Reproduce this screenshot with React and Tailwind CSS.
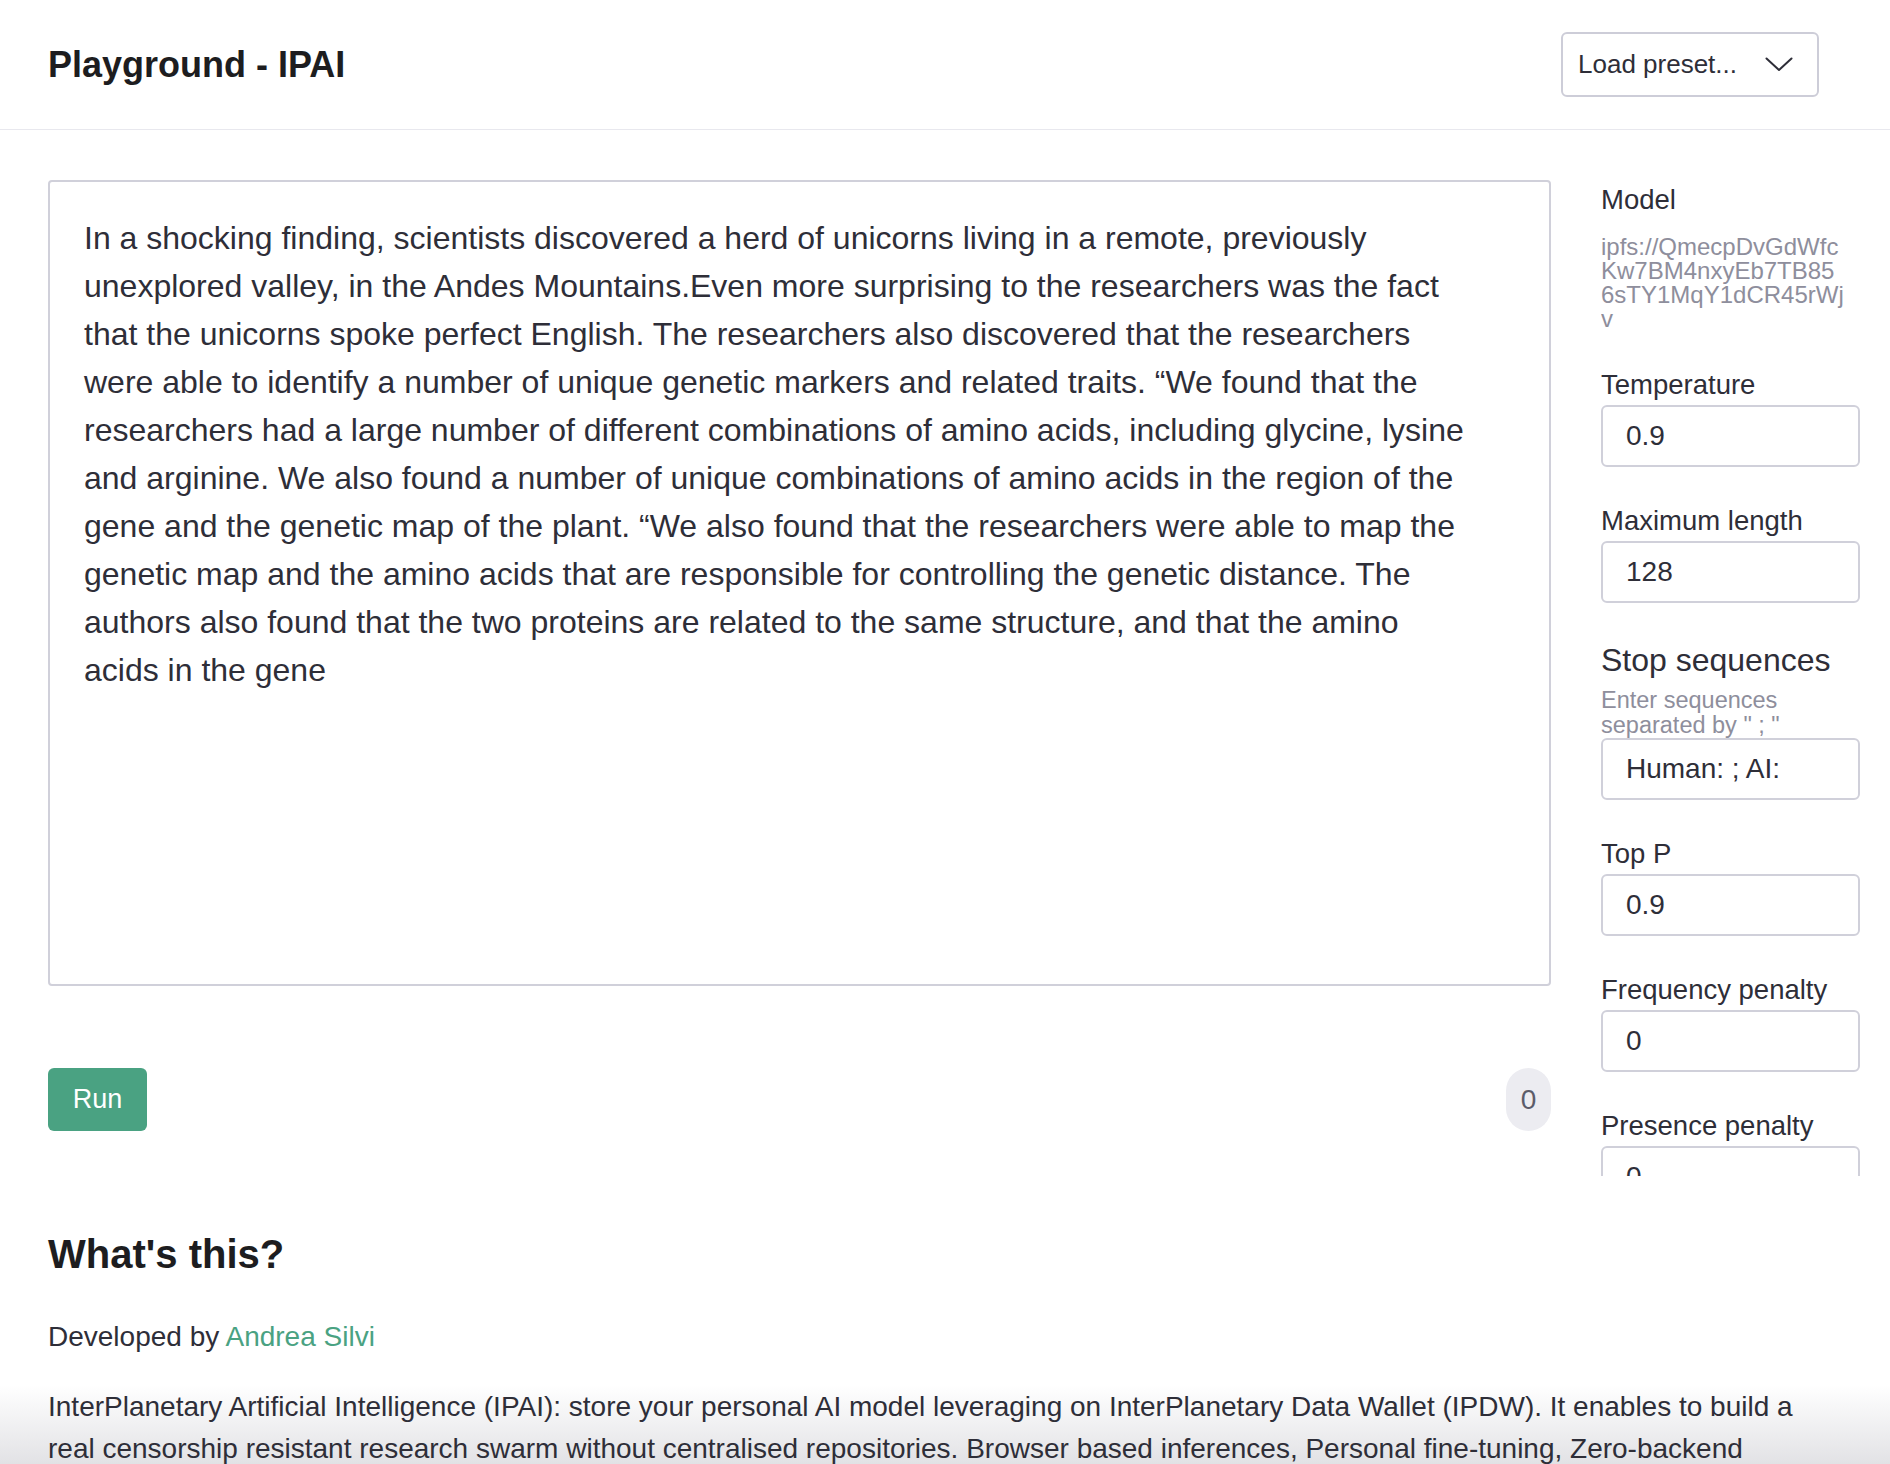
import React from "react";

const story =
  "In a shocking finding, scientists discovered a herd of unicorns living in a remote, previously unexplored valley, in the Andes Mountains.Even more surprising to the researchers was the fact that the unicorns spoke perfect English. The researchers also discovered that the researchers were able to identify a number of unique genetic markers and related traits. \u201cWe found that the researchers had a large number of different combinations of amino acids, including glycine, lysine and arginine. We also found a number of unique combinations of amino acids in the region of the gene and the genetic map of the plant. \u201cWe also found that the researchers were able to map the genetic map and the amino acids that are responsible for controlling the genetic distance. The authors also found that the two proteins are related to the same structure, and that the amino acids in the gene";

const modelLines = ["ipfs://QmecpDvGdWfc", "Kw7BM4nxyEb7TB85", "6sTY1MqY1dCR45rWj", "v"];

function Field({ label, value }) {
  return (
    <div className="mb-[39px]">
      <label className="block text-[27.5px] leading-[30px] mb-[5px] text-[#2e2e38]">{label}</label>
      <input
        readOnly
        value={value}
        className="block w-full h-[62px] rounded-md border-2 border-[#d0d0da] px-[23px] text-[28px] text-[#2e2e38] outline-none bg-white"
      />
    </div>
  );
}

export default function App() {
  return (
    <div className="relative min-h-screen bg-[linear-gradient(to_bottom,#ffffff_1385px,#e2e2e5_1464px)] font-['Liberation_Sans',Arial,sans-serif] text-[#2e2e38]">
      <header className="h-[130px] bg-white border-b border-[#e8e8ee] flex items-center justify-between pl-12 pr-[71px]">
        <h1 className="text-[36px] font-bold text-[#1d1d20]">Playground - IPAI</h1>
        <div className="w-[258px] h-[65px] rounded-md border-2 border-[#cdcdd8] flex items-center justify-between pl-[15px] pr-[24px]">
          <span className="text-[26px] text-[#2e2e38]">Load preset...</span>
          <svg width="28" height="15" viewBox="0 0 28 15" fill="none">
            <polyline points="1.5,1.5 14,13 26.5,1.5" stroke="#2e2e38" strokeWidth="2" strokeLinecap="round" strokeLinejoin="round" />
          </svg>
        </div>
      </header>

      <main className="flex items-start gap-[50px] pl-12 pt-[50px]">
        <div className="w-[1503px] shrink-0">
          <textarea
            readOnly
            defaultValue={story}
            className="block w-full h-[806px] resize-none rounded-[4px] border-2 border-[#d0d0da] bg-white pl-[34px] pr-[72px] pt-[32px] text-[32px] leading-[48px] text-[#2e2e38] outline-none font-['Liberation_Sans',Arial,sans-serif]"
          />
          <div className="mt-[82px] flex items-center justify-between">
            <button className="w-[99px] h-[63px] rounded-md bg-[#4aa282] text-white text-[27px]">Run</button>
            <span className="w-[45px] h-[63px] rounded-full bg-[#ececf1] text-[#5c5c6a] text-[28px] flex items-center justify-center">0</span>
          </div>
        </div>

        <aside className="w-[259px] shrink-0 h-[996px] overflow-hidden pt-[5px]">
          <div className="text-[27.5px] leading-[30px] text-[#2e2e38]">Model</div>
          <div className="mt-[20px] mb-[39px] text-[24px] leading-[24px] text-[#8e8e9c]">
            {modelLines.map((line) => (
              <div key={line}>{line}</div>
            ))}
          </div>
          <Field label="Temperature" value="0.9" />
          <Field label="Maximum length" value="128" />
          <div className="mb-[39px]">
            <div className="text-[32px] leading-[36px] text-[#2e2e38]">Stop sequences</div>
            <div className="mt-[10px] text-[23.5px] leading-[24.5px] text-[#8e8e9c]">Enter sequences separated by " ; "</div>
            <input
              readOnly
              value="Human: ; AI:"
              className="mt-[1px] block w-full h-[62px] rounded-md border-2 border-[#d0d0da] px-[23px] text-[28px] text-[#2e2e38] outline-none bg-white"
            />
          </div>
          <Field label="Top P" value="0.9" />
          <Field label="Frequency penalty" value="0" />
          <Field label="Presence penalty" value="0" />
        </aside>
      </main>

      <section className="px-12 pt-[54px]">
        <h2 className="text-[40px] leading-[48px] font-bold text-[#1d1d20]">What's this?</h2>
        <p className="mt-[38px] text-[28px] leading-[42px]">
          Developed by <a className="text-[#4aa282]">Andrea Silvi</a>
        </p>
        <p className="mt-[28px] w-[1770px] text-[28px] leading-[42px]">
          InterPlanetary Artificial Intelligence (IPAI): store your personal AI model leveraging on InterPlanetary Data Wallet (IPDW). It enables to build a real censorship resistant research swarm without centralised repositories. Browser based inferences, Personal fine-tuning, Zero-backend
        </p>
      </section>
    </div>
  );
}
